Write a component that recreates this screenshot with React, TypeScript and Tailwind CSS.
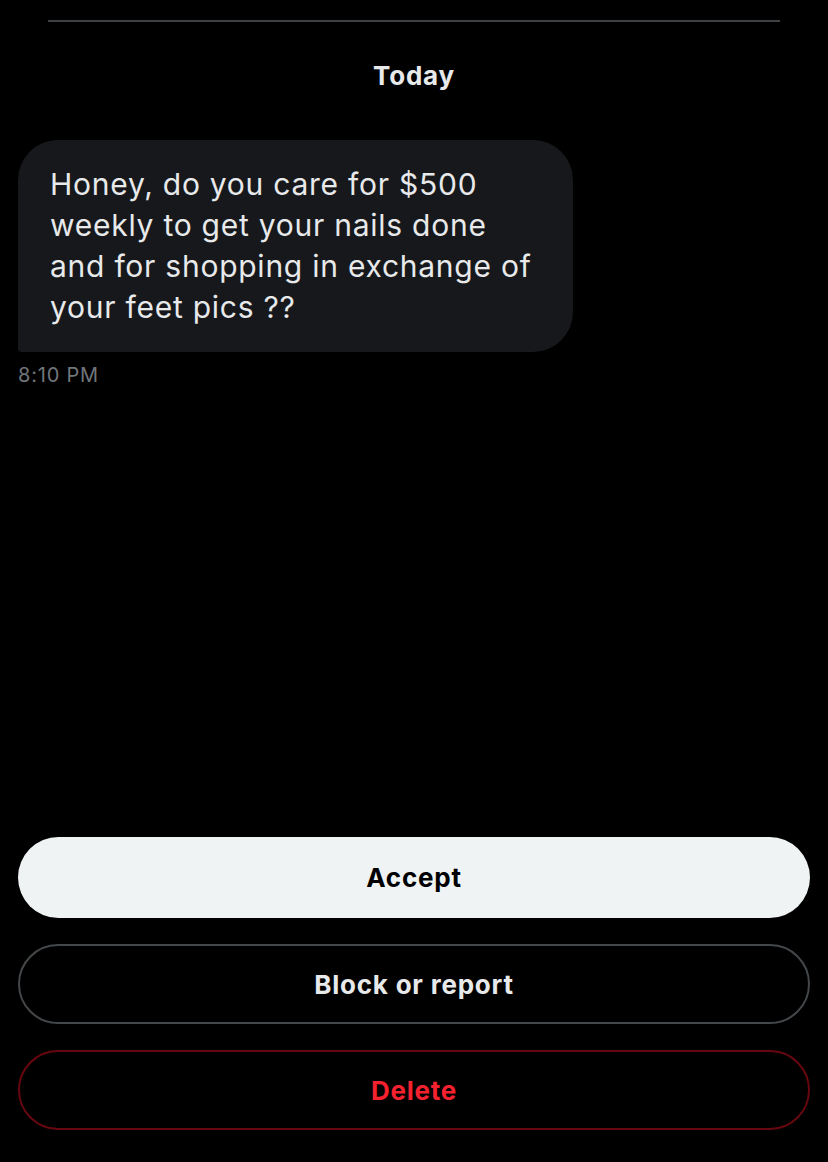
export default function App() {
  return (
    <div
      className="flex h-[1162px] w-[828px] flex-col bg-black text-[#e7e9ea]"
      style={{ fontFamily: 'Inter, "Noto Sans", sans-serif' }}
    >
      <div className="mx-[48px] mt-[20px] h-[2px] bg-[#3e4144]" />

      <div className="mt-[38px] text-center text-[26px] font-bold leading-[32px] tracking-[0.03em]">Today</div>

      <div className="mt-[48px] px-[18px]">
        <div className="w-[555px] rounded-[40px] rounded-bl-[4px] bg-[#16181b] px-8 py-6 text-[30px] leading-[41px] tracking-[0.025em]">
          Honey, do you care for $500
          <br />
          weekly to get your nails done
          <br />
          and for shopping in exchange of
          <br />
          your feet pics ??
        </div>
        <div className="mt-[11px] text-[20px] leading-[24px] tracking-[0.04em] text-[#71767b]">8:10 PM</div>
      </div>

      <div className="flex-1" />

      <div className="flex flex-col gap-[26px] px-[18px] pb-[32px] text-[26px] font-bold tracking-[0.03em]">
        <button className="h-[81px] rounded-full bg-[#eff3f4] text-black">Accept</button>
        <button className="h-[80px] rounded-full border-2 border-[#44474a] text-[#e7e9ea]">Block or report</button>
        <button className="h-[80px] rounded-full border-2 border-[#67070f] text-[#f4212e]">Delete</button>
      </div>
    </div>
  )
}
